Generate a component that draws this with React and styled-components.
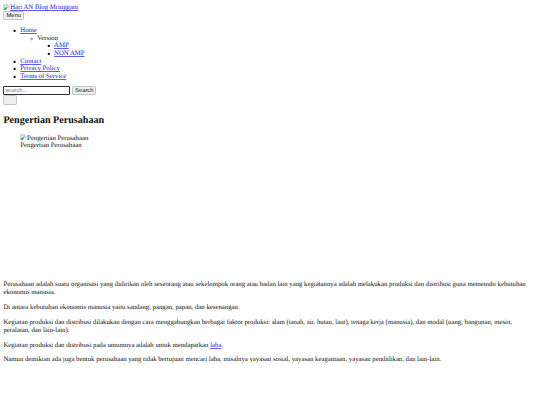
import React from "react";
import styled, { createGlobalStyle } from "styled-components";

const GlobalStyle = createGlobalStyle`
  body {
    margin: 0;
    background: #fff;
  }
`;

const Page = styled.div`
  box-sizing: border-box;
  width: 540px;
  height: 405px;
  overflow: hidden;
  padding: 4px 3.4px 3.4px;
  color: #111;
  font-family: "Liberation Serif", "Times New Roman", serif;
  font-size: 6.75px;
  line-height: 7.6px;
  text-rendering: geometricPrecision;
`;

const Link = styled.a`
  color: #1a1ad8;
  text-decoration: underline;
  text-decoration-color: #5c5cf0;
  text-decoration-thickness: 0.5px;
  text-underline-offset: 0.6px;
`;

const Logo = styled(Link)`
  display: flex;
  height: 7.4px;
`;

const BrokenIcon = styled.svg`
  display: inline-block;
  flex: none;
  width: 6.75px;
  height: 6.75px;
  vertical-align: -1.2px;
`;

const Button = styled.button`
  box-sizing: border-box;
  display: block;
  width: ${(p) => p.$width}px;
  height: ${(p) => p.$height || 9}px;
  margin: 0;
  padding: 0.6px 0 0;
  border: 0.5px solid #c4c4c4;
  border-radius: 1.3px;
  background: #efefef;
  color: #111;
  font-family: "Liberation Sans", Arial, sans-serif;
  font-size: 5.8px;
  line-height: 6px;
  text-align: center;
  text-rendering: geometricPrecision;
`;

const List = styled.ul`
  margin: ${(p) => (p.$nested ? "0" : "6.75px 0 6.1px")};
  padding: 0 0 0 16.875px;
  list-style: none;
`;

const Item = styled.li`
  display: block;
`;

const ItemLine = styled.div`
  display: flex;
  height: 7.6px;
  margin-left: -7.4px;
`;

const Marker = styled.svg`
  flex: none;
  width: 7.4px;
  height: 7.6px;
`;

const SearchForm = styled.form`
  display: flex;
  gap: 1.7px;
  margin: 0;
`;

const SearchInput = styled.input`
  box-sizing: border-box;
  width: 67px;
  height: 9px;
  margin: 0;
  padding: 0 0.8px;
  border: 1px solid #303030;
  border-radius: 1px;
  outline: none;
  background: #fff;
  font-family: "Liberation Sans", Arial, sans-serif;
  font-size: 5.8px;
  text-rendering: geometricPrecision;

  &::placeholder {
    color: #757575;
    opacity: 1;
  }
`;

const Title = styled.h2`
  margin: 9.6px 0 7.3px;
  font-size: 10.125px;
  font-weight: 700;
  line-height: 11.6px;
`;

const Figure = styled.figure`
  height: 140.6px;
  margin: 0 16.875px 6.75px;
`;

const Caption = styled.figcaption`
  display: block;
`;

const Paragraph = styled.p`
  margin: 0 0 ${(p) => p.$gap || 7.5}px;
`;

function MissingImage() {
  return (
    <BrokenIcon viewBox="0 0 16 16">
      <path d="M1.5 1.5h9l4 4v9h-13z" fill="#c5d9f7" stroke="#a0a0a0" />
      <path d="M10.5 1.5v4h4" fill="#fff" stroke="#a0a0a0" />
      <circle cx="5.5" cy="5.5" r="1.7" fill="#fff" />
      <path d="M2 14v-2l5-5 3 3-4 4z" fill="#4caf50" />
      <path d="M6 15l9-8v8z" fill="#fff" />
    </BrokenIcon>
  );
}

function Entry({ shape, children, sub }) {
  return (
    <Item>
      <ItemLine>
        <Marker viewBox="0 0 7.4 7.6">
          {shape === "disc" && <circle cx="1.6" cy="3.9" r="1.15" />}
          {shape === "circle" && (
            <circle cx="1.6" cy="3.9" r="0.95" fill="none" stroke="#000" strokeWidth="0.4" />
          )}
          {shape === "square" && <rect x="0.8" y="2.9" width="2" height="2" />}
        </Marker>
        {children}
      </ItemLine>
      {sub}
    </Item>
  );
}

export default function App() {
  return (
    <>
      <GlobalStyle />
      <Page>
        <Logo>
          <MissingImage />
          Hari AN Blog Mringgani
        </Logo>
        <Button $width={20.7}>Menu</Button>
        <List>
          <Entry
            shape="disc"
            sub={
              <List $nested>
                <Entry
                  shape="circle"
                  sub={
                    <List $nested>
                      <Entry shape="square"><Link>AMP</Link></Entry>
                      <Entry shape="square"><Link>NON AMP</Link></Entry>
                    </List>
                  }
                >
                  Version
                </Entry>
              </List>
            }
          >
            <Link>Home</Link>
          </Entry>
          <Entry shape="disc"><Link>Contact</Link></Entry>
          <Entry shape="disc"><Link>Privacy Policy</Link></Entry>
          <Entry shape="disc"><Link>Terms of Service</Link></Entry>
        </List>
        <SearchForm>
          <SearchInput placeholder="search..." />
          <Button type="button" $width={24.4}>Search</Button>
        </SearchForm>
        <Button $width={13.3} $height={10} aria-label="Toggle" />
        <Title>Pengertian Perusahaan</Title>
        <Figure>
          <MissingImage />
          Pengertian Perusahaan
          <Caption>Pengertian Perusahaan</Caption>
        </Figure>
        <Paragraph>
          Perusahaan adalah suatu organisasi yang didirikan oleh seseorang atau sekelompok orang atau badan lain yang kegiatannya adalah melakukan produksi dan distribusi guna memenuhi kebutuhan ekonomis manusia.
        </Paragraph>
        <Paragraph>
          Di antara kebutuhan ekonomis manusia yaitu sandang, pangan, papan, dan kesenangan.
        </Paragraph>
        <Paragraph>
          Kegiatan produksi dan distribusi dilakukan dengan cara menggabungkan berbagai faktor produksi: alam (tanah, air, hutan, laut), tenaga kerja (manusia), dan modal (uang, bangunan, mesin, peralatan, dan lain-lain).
        </Paragraph>
        <Paragraph $gap={6.75}>
          Kegiatan produksi dan distribusi pada umumnya adalah untuk mendapatkan <Link>laba</Link>.
        </Paragraph>
        <Paragraph>
          Namun demikian ada juga bentuk perusahaan yang tidak bertujuan mencari laba, misalnya yayasan sosial, yayasan keagamaan, yayasan pendidikan, dan lain-lain.
        </Paragraph>
      </Page>
    </>
  );
}
